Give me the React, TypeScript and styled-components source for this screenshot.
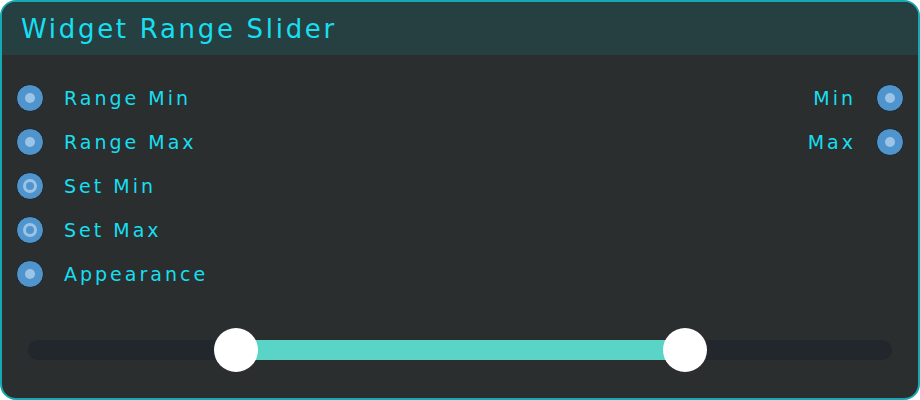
import React from "react";
import styled, { createGlobalStyle } from "styled-components";

const Global = createGlobalStyle`
  html, body { margin: 0; padding: 0; background: #ffffff; }
  body { font-family: "DejaVu Sans", "Noto Sans", sans-serif; }
`;

const Panel = styled.div`
  box-sizing: border-box;
  width: 920px;
  height: 400px;
  border: 2px solid #17a9b3;
  border-radius: 16px;
  background: #2b2e2f;
  overflow: hidden;
  display: flex;
  flex-direction: column;
`;

const Header = styled.div`
  height: 53px;
  background: #264042;
  display: flex;
  align-items: center;
  padding-left: 19px;
  color: #16dff0;
  font-size: 26px;
  letter-spacing: 2.7px;
`;

const Body = styled.div`
  flex: 1;
  display: flex;
  flex-direction: column;
  padding: 29px 14px 0 14px;
`;

const Ports = styled.div`
  display: grid;
  grid-template-columns: 1fr auto;
`;

const Column = styled.div`
  display: flex;
  flex-direction: column;
  gap: 16px;
`;

const Port = styled.div<{ $right?: boolean }>`
  display: flex;
  align-items: center;
  flex-direction: ${(p) => (p.$right ? "row-reverse" : "row")};
  gap: 20px;
  height: 28px;
  color: #16dff0;
  font-size: 19px;
  letter-spacing: 3px;
`;

const Socket = styled.div<{ $ring?: boolean }>`
  box-sizing: border-box;
  width: 28px;
  height: 28px;
  border-radius: 50%;
  background: #4f94cc;
  border: 1.5px solid #1d2226;
  display: flex;
  align-items: center;
  justify-content: center;
  flex-shrink: 0;
  &::after {
    content: "";
    box-sizing: border-box;
    width: ${(p) => (p.$ring ? "14px" : "10px")};
    height: ${(p) => (p.$ring ? "14px" : "10px")};
    border-radius: 50%;
    background: ${(p) => (p.$ring ? "transparent" : "#9cc4e6")};
    border: ${(p) => (p.$ring ? "3px solid #9cc4e6" : "none")};
  }
`;

const SliderArea = styled.div`
  margin-top: auto;
  padding: 0 12px 38px 12px;
`;

const Track = styled.div`
  position: relative;
  height: 20px;
  border-radius: 10px;
  background: #22262d;
`;

const Fill = styled.div`
  position: absolute;
  top: 0;
  bottom: 0;
  background: #5bd4c8;
`;

const Handle = styled.div`
  position: absolute;
  top: 50%;
  width: 44px;
  height: 44px;
  margin-left: -22px;
  margin-top: -22px;
  border-radius: 50%;
  background: #ffffff;
`;

const left = [
  { label: "Range Min", ring: false },
  { label: "Range Max", ring: false },
  { label: "Set Min", ring: true },
  { label: "Set Max", ring: true },
  { label: "Appearance", ring: false },
];
const right = ["Min", "Max"];

export default function App() {
  const trackW = 864;
  const a = 236 - 28;
  const b = 685 - 28;
  return (
    <>
      <Global />
      <Panel>
        <Header>Widget Range Slider</Header>
        <Body>
          <Ports>
            <Column>
              {left.map((p) => (
                <Port key={p.label}>
                  <Socket $ring={p.ring} />
                  <span>{p.label}</span>
                </Port>
              ))}
            </Column>
            <Column>
              {right.map((l) => (
                <Port key={l} $right>
                  <Socket />
                  <span>{l}</span>
                </Port>
              ))}
            </Column>
          </Ports>
          <SliderArea>
            <Track>
              <Fill style={{ left: a, width: b - a }} />
              <Handle style={{ left: (a / trackW) * 100 + "%" }} />
              <Handle style={{ left: (b / trackW) * 100 + "%" }} />
            </Track>
          </SliderArea>
        </Body>
      </Panel>
    </>
  );
}
